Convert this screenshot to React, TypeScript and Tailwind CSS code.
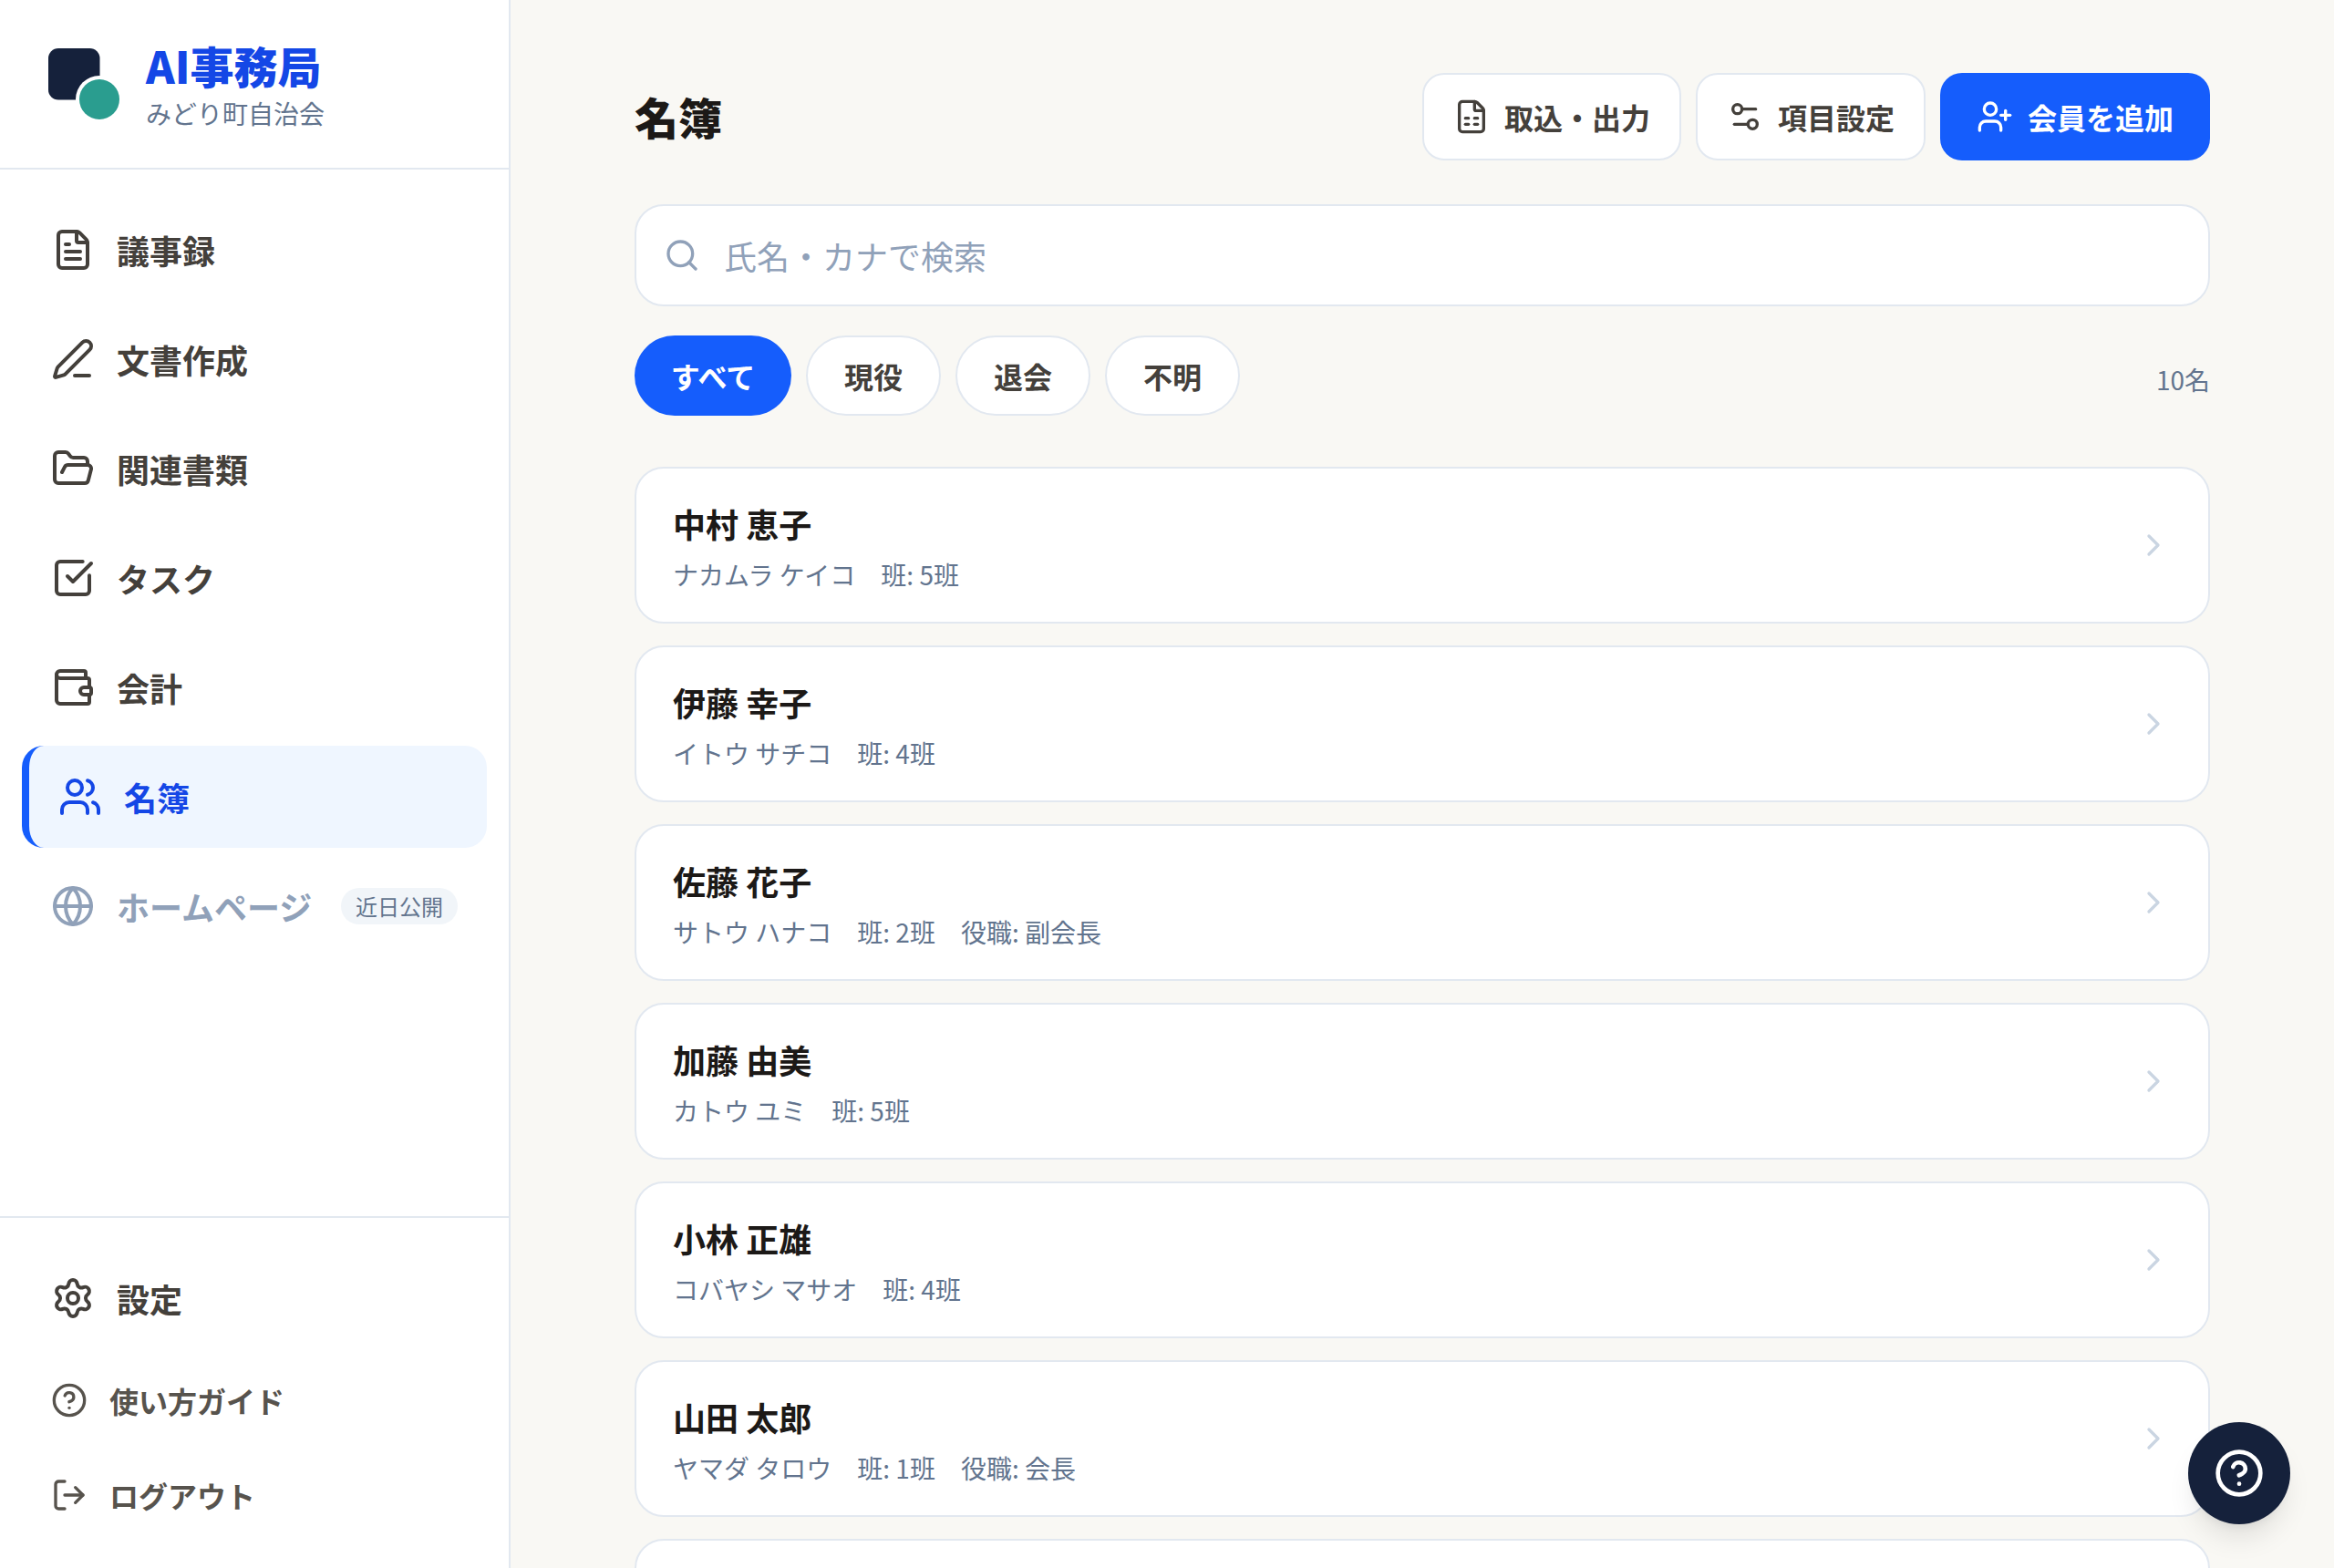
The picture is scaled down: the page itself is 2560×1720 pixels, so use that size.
import React from "react";
import {
    ChevronRight,
    CircleHelp,
    FileSpreadsheet,
    FileText,
    FolderOpen,
    Globe,
    LogOut,
    PenLine,
    Search,
    Settings,
    Settings2,
    SquareCheckBig,
    UserPlus,
    Users,
    Wallet,
} from "lucide-react";

const navItems = [
    { label: "議事録", icon: FileText },
    { label: "文書作成", icon: PenLine },
    { label: "関連書類", icon: FolderOpen },
    { label: "タスク", icon: SquareCheckBig },
    { label: "会計", icon: Wallet },
    { label: "名簿", icon: Users, active: true },
    { label: "ホームページ", icon: Globe, badge: "近日公開" },
];

const filters = ["すべて", "現役", "退会", "不明"];

const members = [
    { name: "中村 恵子", kana: "ナカムラ ケイコ", group: "5班" },
    { name: "伊藤 幸子", kana: "イトウ サチコ", group: "4班" },
    { name: "佐藤 花子", kana: "サトウ ハナコ", group: "2班", role: "副会長" },
    { name: "加藤 由美", kana: "カトウ ユミ", group: "5班" },
    { name: "小林 正雄", kana: "コバヤシ マサオ", group: "4班" },
    { name: "山田 太郎", kana: "ヤマダ タロウ", group: "1班", role: "会長" },
];

function Logo() {
    return (
        <svg viewBox="0 0 96 96" className="size-24 shrink-0">
            <rect x="13" y="13" width="56.5" height="56.5" rx="11" fill="#15213b" />
            <circle cx="69" cy="69" r="26" fill="#ffffff" />
            <circle cx="69" cy="69" r="22" fill="#2a9d8f" />
        </svg>
    );
}

function Sidebar() {
    return (
        <aside className="flex h-full w-[560px] shrink-0 flex-col border-r-2 border-slate-200 bg-white">
            <div className="flex h-[186px] shrink-0 items-start gap-6 border-b-2 border-slate-200 pt-10 pl-10">
                <Logo />
                <div>
                    <p className="text-[48px] leading-[62px] font-black text-blue-700">AI事務局</p>
                    <p className="mt-0.5 text-[28px] leading-[40px] text-slate-500">みどり町自治会</p>
                </div>
            </div>

            <nav className="flex flex-1 flex-col gap-2 px-6 py-8">
                {navItems.map(({ label, icon: Icon, active, badge }) => (
                    <a
                        key={label}
                        className={
                            active
                                ? "flex h-28 items-center gap-6 rounded-3xl border-l-8 border-blue-600 bg-blue-50 px-8 text-blue-700"
                                : badge
                                  ? "flex h-28 items-center gap-6 rounded-3xl px-8 text-slate-400"
                                  : "flex h-28 items-center gap-6 rounded-3xl px-8 text-stone-700"
                        }
                    >
                        <Icon className="size-12 shrink-0" />
                        <span className="text-[36px] font-bold whitespace-nowrap">{label}</span>
                        {badge && (
                            <span className="ml-auto rounded-full bg-slate-100 px-4 py-1 text-2xl whitespace-nowrap text-slate-500">
                                {badge}
                            </span>
                        )}
                    </a>
                ))}
            </nav>

            <div className="flex flex-col gap-2 border-t-2 border-slate-200 px-6 py-8">
                <a className="flex h-28 items-center gap-6 px-8 text-stone-700">
                    <Settings className="size-12" />
                    <span className="text-[36px] font-bold">設定</span>
                </a>
                <a className="flex h-24 items-center gap-6 px-8 text-stone-600">
                    <CircleHelp className="size-10" />
                    <span className="text-[32px] font-bold">使い方ガイド</span>
                </a>
                <a className="flex h-24 items-center gap-6 px-8 text-stone-600">
                    <LogOut className="size-10" />
                    <span className="text-[32px] font-bold">ログアウト</span>
                </a>
            </div>
        </aside>
    );
}

export default function App() {
    return (
        <div
            lang="ja"
            className="relative flex h-[1720px] w-[2560px] overflow-hidden bg-[#f9f8f4] font-['Noto_Sans_CJK_JP',sans-serif]"
        >
            <Sidebar />

            <main className="flex flex-1 justify-center overflow-hidden pt-20">
                <div className="w-[1728px]">
                    {/* Heading and actions */}
                    <div className="flex h-24 items-center justify-between">
                        <h1 className="pb-0.5 text-5xl font-black text-stone-900">名簿</h1>
                        <div className="flex gap-4 text-[32px] font-bold">
                            <button className="flex h-24 items-center gap-4 rounded-3xl border-2 border-slate-200 bg-white px-8 text-stone-700">
                                <FileSpreadsheet className="size-10" />
                                取込・出力
                            </button>
                            <button className="flex h-24 items-center gap-4 rounded-3xl border-2 border-slate-200 bg-white px-8 text-stone-700">
                                <Settings2 className="size-10" />
                                項目設定
                            </button>
                            <button className="flex h-24 items-center gap-4 rounded-3xl bg-blue-600 px-10 text-white">
                                <UserPlus className="size-10" />
                                会員を追加
                            </button>
                        </div>
                    </div>

                    {/* Search */}
                    <div className="mt-12 flex h-28 items-center gap-[26px] rounded-4xl border-2 border-slate-200 bg-white px-[30px]">
                        <Search className="size-10 shrink-0 text-slate-400" />
                        <input
                            type="text"
                            placeholder="氏名・カナで検索"
                            className="h-full flex-1 text-[36px] outline-none placeholder:text-slate-400"
                        />
                    </div>

                    {/* Status filter */}
                    <div className="mt-8 flex h-22 items-center justify-between">
                        <div className="flex gap-4 text-[32px] font-bold">
                            {filters.map((filter, i) => (
                                <button
                                    key={filter}
                                    className={
                                        i === 0
                                            ? "flex h-22 w-43 items-center justify-center rounded-full bg-blue-600 whitespace-nowrap text-white"
                                            : "flex h-22 w-37 items-center justify-center rounded-full border-2 border-slate-200 bg-white whitespace-nowrap text-stone-700"
                                    }
                                >
                                    {filter}
                                </button>
                            ))}
                        </div>
                        <p className="pt-2 text-[28px] text-slate-500">10名</p>
                    </div>

                    {/* Member list */}
                    <ul className="mt-14 flex flex-col gap-6">
                        {members.map((member) => (
                            <li
                                key={member.name}
                                className="flex h-[172px] items-center justify-between rounded-4xl border-2 border-slate-200 bg-white px-10"
                            >
                                <div>
                                    <p className="text-[36px] leading-[64px] font-bold text-stone-900">{member.name}</p>
                                    <p className="flex gap-7 text-[28px] leading-[48px] text-slate-500">
                                        <span>{member.kana}</span>
                                        <span>班: {member.group}</span>
                                        {member.role && <span>役職: {member.role}</span>}
                                    </p>
                                </div>
                                <ChevronRight className="size-10 text-slate-300" />
                            </li>
                        ))}
                        {/* Next row, only its top edge is in view */}
                        <li className="h-[172px] shrink-0 rounded-4xl border-2 border-slate-200 bg-white" />
                    </ul>
                </div>
            </main>

            <button className="absolute right-12 bottom-12 flex size-28 items-center justify-center rounded-full bg-[#15213b] text-white shadow-[0_20px_30px_-6px_rgba(0,0,0,0.1),0_8px_12px_-8px_rgba(0,0,0,0.1)]">
                <CircleHelp className="size-14" />
            </button>
        </div>
    );
}
